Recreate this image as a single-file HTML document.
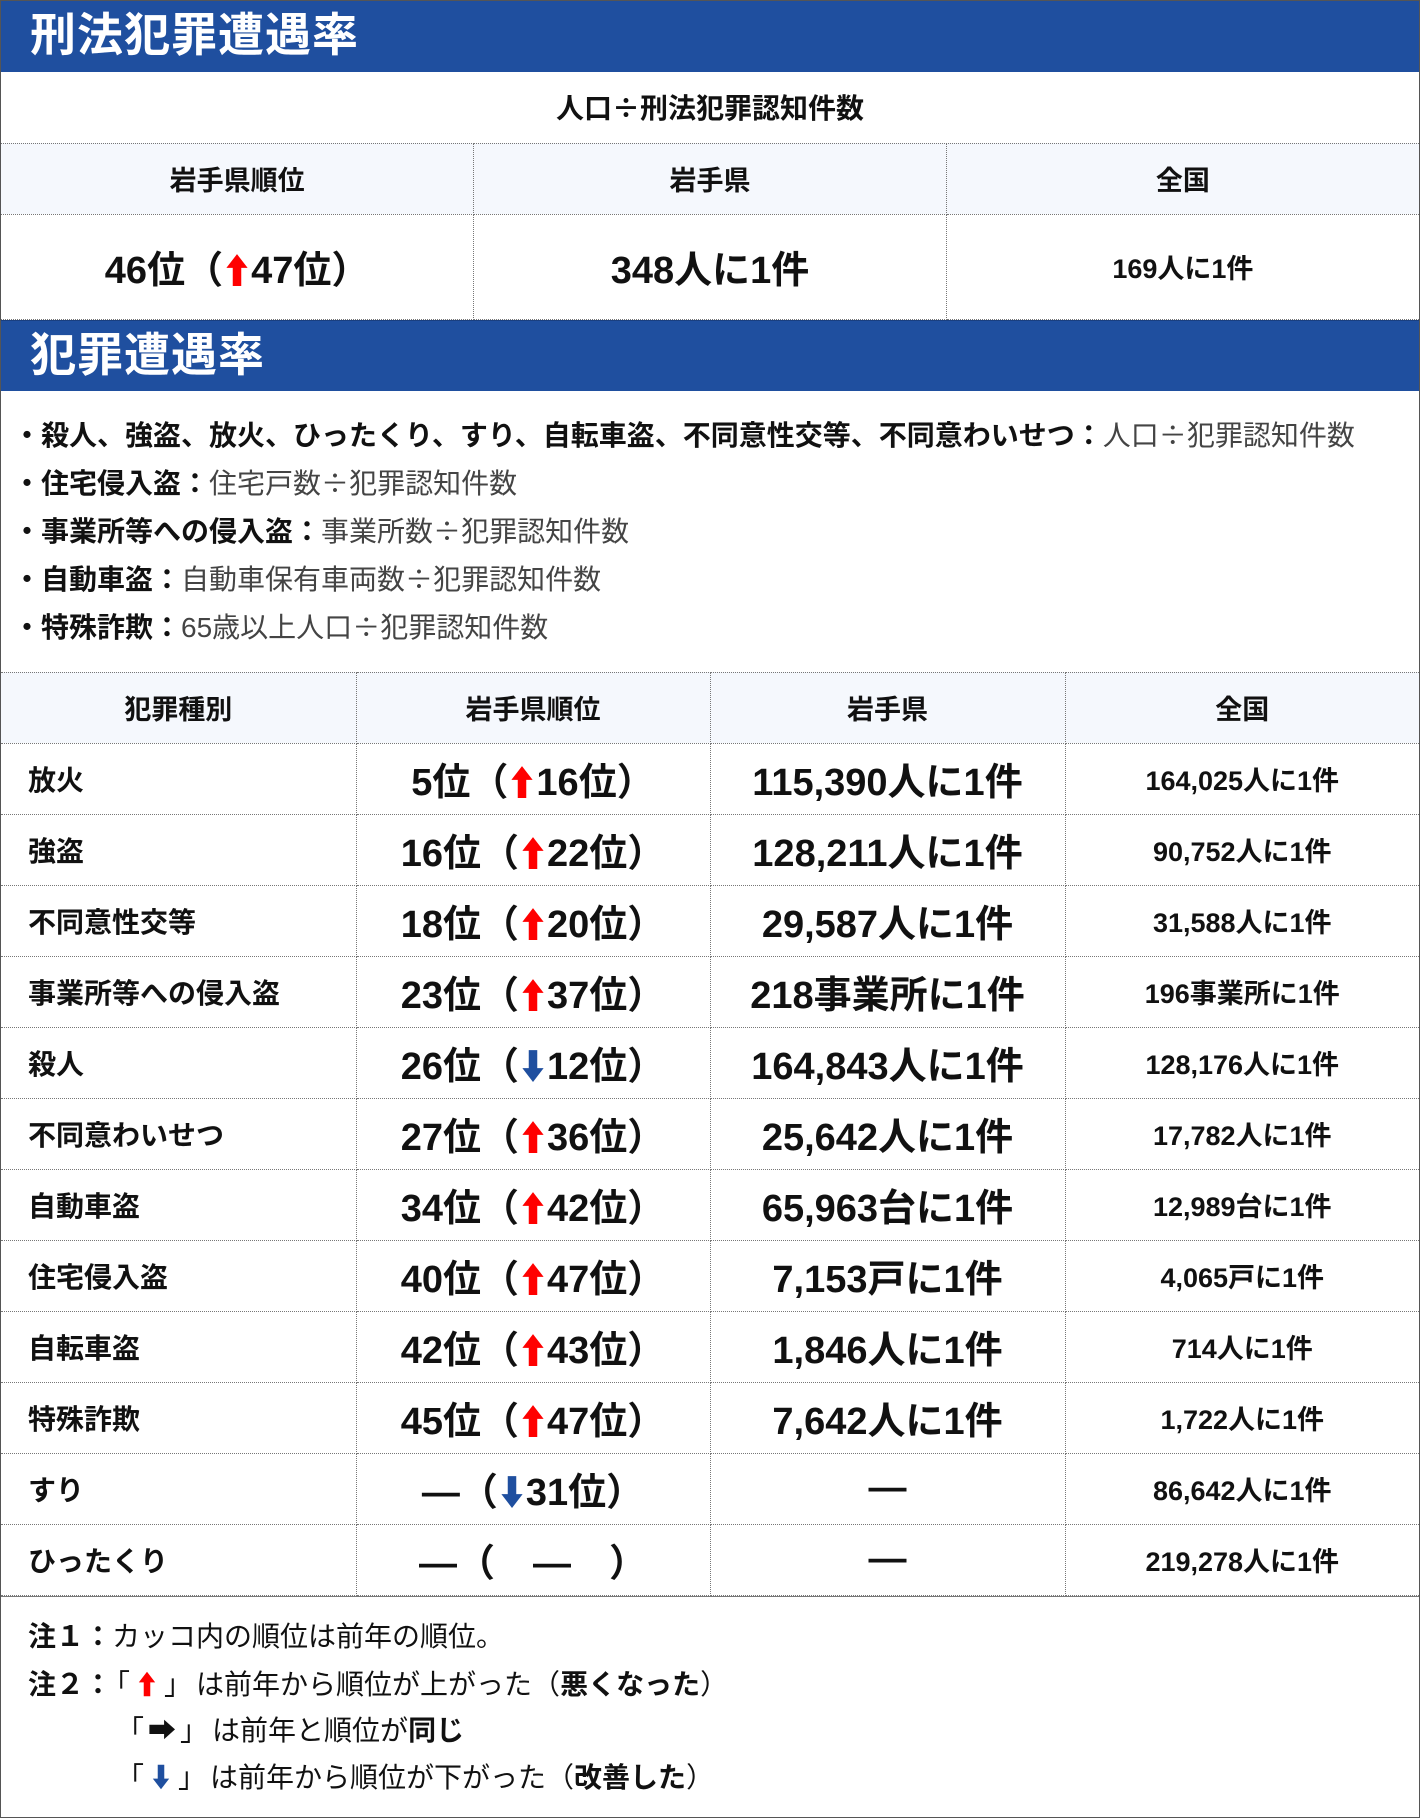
<!DOCTYPE html>
<html><head><meta charset="utf-8"><style>
*{box-sizing:border-box;margin:0;padding:0}
body{width:1420px;height:1818px;background:#fff;font-family:"Liberation Sans","Noto Sans CJK JP",sans-serif;color:#111;overflow:hidden}
.j{font-family:"Noto Sans CJK JP",sans-serif}
.wrap{position:absolute;left:0;top:0;width:1420px;height:1818px;border:1px solid #555}
.h{background:#1f4f9f;color:#fff;font-weight:bold;font-size:46px;padding-left:29px;height:71px;line-height:68px;border-top:1px solid #1a3f80;letter-spacing:1px}
table{border-collapse:collapse;width:100%;table-layout:fixed}
td{border:1px dotted #777;text-align:center;font-weight:bold}
tr td:first-child{border-left:none}tr td:last-child{border-right:none}
.th td{background:#f5f8fd;font-size:27px;height:71px}
.big{font-size:38px}
.mid{font-size:27px}
.l{text-align:left;padding-left:27px;font-size:28px}
.up,.dn{display:inline-block;width:24px;height:34px;vertical-align:-4px;margin:0 2px}
.bul{padding:20px 0 0 12px;height:281px;font-size:28px;line-height:47px}
.bul b{font-weight:bold}.bul span{color:#444;font-weight:normal}
.notes{padding:17px 0 0 27px;font-size:28px;border-top:1px solid #777}
.notes div{height:46.4px;line-height:46px;white-space:nowrap}
.notes b{font-weight:bold}
.ind{padding-left:84px}
.br{margin:0 4px}
.sm{display:inline-block;width:18px;height:28px;vertical-align:-4px;margin:0 4px}
</style></head><body><div class="wrap">
<svg width="0" height="0" style="position:absolute"><defs>
<symbol id="u" viewBox="0 0 22 32"><path d="M11 1 L21 14 L15 14 L15 31 L7 31 L7 14 L1 14 Z" fill="#ff0000"/></symbol>
<symbol id="d" viewBox="0 0 22 32"><path d="M11 31 L21 18 L15 18 L15 1 L7 1 L7 18 L1 18 Z" fill="#1f4f9f"/></symbol>
</defs></svg>
<div class="h" style="border-top:none">刑法犯罪遭遇率</div>
<table>
<tr><td colspan="3" class="mid" style="height:71px;border-top:none;font-size:28px">人口<span class="j">÷</span>刑法犯罪認知件数</td></tr>
<tr class="th"><td>岩手県順位</td><td>岩手県</td><td>全国</td></tr>
<tr style="height:105px"><td class="big">46位（<svg class="up"><use href="#u"/></svg>47位）</td><td class="big">348人に1件</td><td class="mid">169人に1件</td></tr>
</table>
<div class="h">犯罪遭遇率</div>
<div class="bul">
<div><b><span class="j" style="color:#111;font-weight:bold">・</span>殺人、強盗、放火、ひったくり、すり、自転車盗、不同意性交等、不同意わいせつ：</b><span>人口<span class="j">÷</span>犯罪認知件数</span></div>
<div><b><span class="j" style="color:#111;font-weight:bold">・</span>住宅侵入盗：</b><span>住宅戸数<span class="j">÷</span>犯罪認知件数</span></div>
<div><b><span class="j" style="color:#111;font-weight:bold">・</span>事業所等への侵入盗：</b><span>事業所数<span class="j">÷</span>犯罪認知件数</span></div>
<div><b><span class="j" style="color:#111;font-weight:bold">・</span>自動車盗：</b><span>自動車保有車両数<span class="j">÷</span>犯罪認知件数</span></div>
<div><b><span class="j" style="color:#111;font-weight:bold">・</span>特殊詐欺：</b><span>65歳以上人口<span class="j">÷</span>犯罪認知件数</span></div>
</div>
<table class="t2">
<colgroup><col style="width:355px"><col style="width:354px"><col style="width:355px"><col></colgroup>
<tr class="th"><td>犯罪種別</td><td>岩手県順位</td><td>岩手県</td><td>全国</td></tr>
<tr style="height:71px"><td class="l">放火</td><td class="big">5位（<svg class="up"><use href="#u"/></svg>16位）</td><td class="big">115,390人に1件</td><td class="mid">164,025人に1件</td></tr>
<tr style="height:71px"><td class="l">強盗</td><td class="big">16位（<svg class="up"><use href="#u"/></svg>22位）</td><td class="big">128,211人に1件</td><td class="mid">90,752人に1件</td></tr>
<tr style="height:71px"><td class="l">不同意性交等</td><td class="big">18位（<svg class="up"><use href="#u"/></svg>20位）</td><td class="big">29,587人に1件</td><td class="mid">31,588人に1件</td></tr>
<tr style="height:71px"><td class="l">事業所等への侵入盗</td><td class="big">23位（<svg class="up"><use href="#u"/></svg>37位）</td><td class="big">218事業所に1件</td><td class="mid">196事業所に1件</td></tr>
<tr style="height:71px"><td class="l">殺人</td><td class="big">26位（<svg class="dn"><use href="#d"/></svg>12位）</td><td class="big">164,843人に1件</td><td class="mid">128,176人に1件</td></tr>
<tr style="height:71px"><td class="l">不同意わいせつ</td><td class="big">27位（<svg class="up"><use href="#u"/></svg>36位）</td><td class="big">25,642人に1件</td><td class="mid">17,782人に1件</td></tr>
<tr style="height:71px"><td class="l">自動車盗</td><td class="big">34位（<svg class="up"><use href="#u"/></svg>42位）</td><td class="big">65,963台に1件</td><td class="mid">12,989台に1件</td></tr>
<tr style="height:71px"><td class="l">住宅侵入盗</td><td class="big">40位（<svg class="up"><use href="#u"/></svg>47位）</td><td class="big">7,153戸に1件</td><td class="mid">4,065戸に1件</td></tr>
<tr style="height:71px"><td class="l">自転車盗</td><td class="big">42位（<svg class="up"><use href="#u"/></svg>43位）</td><td class="big">1,846人に1件</td><td class="mid">714人に1件</td></tr>
<tr style="height:71px"><td class="l">特殊詐欺</td><td class="big">45位（<svg class="up"><use href="#u"/></svg>47位）</td><td class="big">7,642人に1件</td><td class="mid">1,722人に1件</td></tr>
<tr style="height:71px"><td class="l">すり</td><td class="big">―（<svg class="dn"><use href="#d"/></svg>31位）</td><td class="big">―</td><td class="mid">86,642人に1件</td></tr>
<tr style="height:71px"><td class="l">ひったくり</td><td class="big">―（　―　）</td><td class="big">―</td><td class="mid">219,278人に1件</td></tr>
</table>
<div class="notes">
<div><b>注１：</b>カッコ内の順位は前年の順位。</div>
<div><b>注２：</b><span class="j br" style="margin-left:4px">「</span><svg class="sm" viewBox="0 0 22 32"><use href="#u"/></svg><span class="j br">」</span>は前年から順位が上がった（<b>悪くなった</b>）</div>
<div class="ind"><span class="j br">「</span><b>➡</b><span class="j br">」</span>は前年と順位が<b>同じ</b></div>
<div class="ind"><span class="j br">「</span><svg class="sm" viewBox="0 0 22 32"><use href="#d"/></svg><span class="j br">」</span>は前年から順位が下がった（<b>改善した</b>）</div>
</div>
</div></body></html>
